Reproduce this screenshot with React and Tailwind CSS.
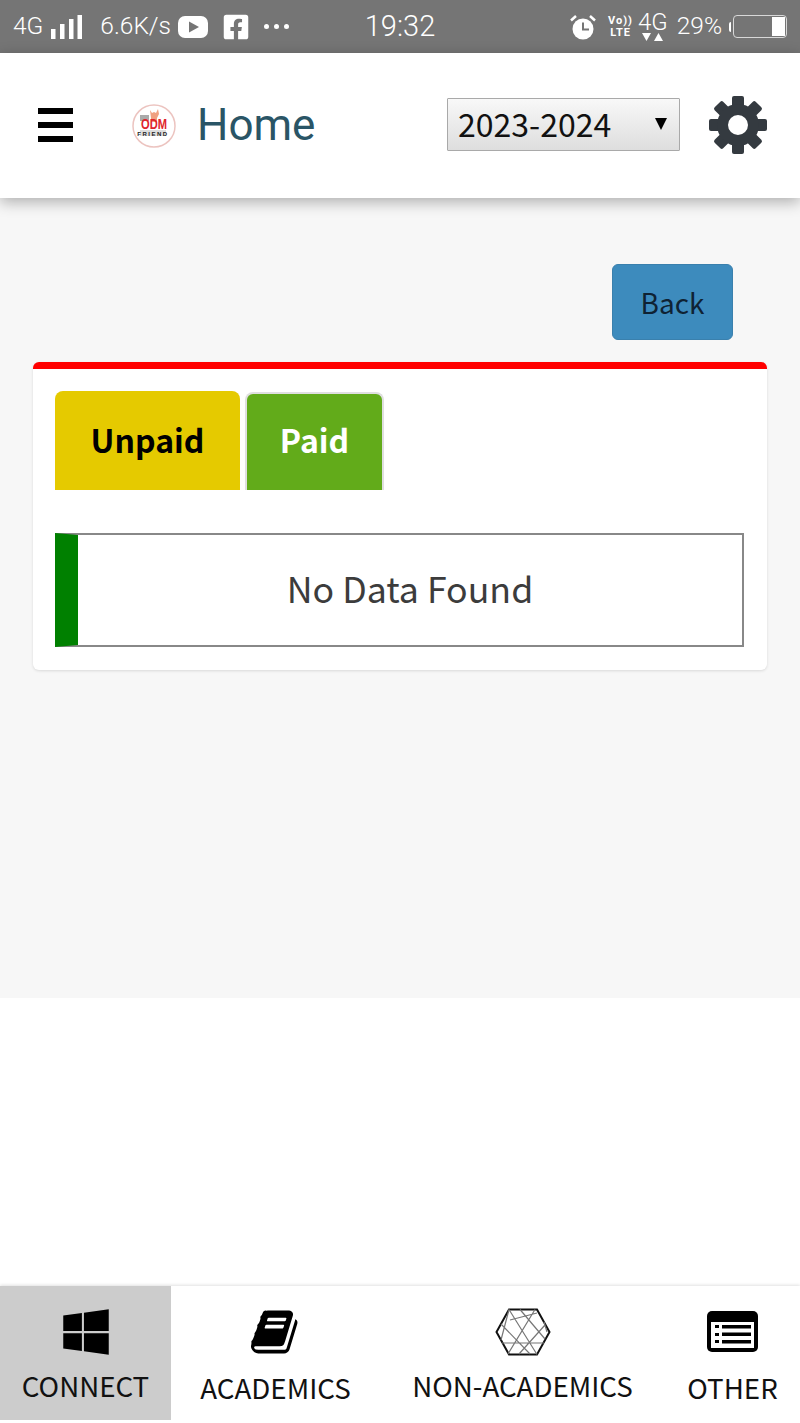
import React from 'react';
import { FaWindows, FaFacebookSquare } from 'react-icons/fa';

const CJK = { fontFamily: '"Noto Sans CJK SC", "Noto Sans", sans-serif' };

const SignalBars = () => (
	<svg width="31" height="24" viewBox="0 0 31 24" fill="#fff">
		<rect x="0" y="14" width="4.500" height="10" />
		<rect x="9" y="9" width="4.500" height="15" />
		<rect x="18" y="4" width="4.500" height="20" />
		<rect x="26.500" y="0" width="4.500" height="24" />
	</svg>
);

const YoutubeIcon = () => (
	<svg width="30" height="22" viewBox="0 0 30 22">
		<rect width="30" height="22" rx="7" fill="#fff" />
		<path d="M11 5.500v11l10-5.500z" fill="#757575" />
	</svg>
);

const AlarmIcon = () => (
	<svg width="26" height="26" viewBox="0 0 26 26">
		<circle cx="13" cy="15" r="10.500" fill="#fff" />
		<path d="M13 8.500v7h6" fill="none" stroke="#757575" strokeWidth="2" />
		<path d="M1 6.500 6 2M25 6.500 20 2" fill="none" stroke="#fff" strokeWidth="2.500" />
	</svg>
);

const Battery = () => (
	<div className="flex items-center">
		<div className="w-[2px] h-[10px] bg-white rounded-l-sm mr-[2px]" />
		<div className="w-[54px] h-[23px] border-[1.5px] border-[#d8d8d8] rounded-[4px] flex justify-end p-[1px]">
			<div className="w-[13px] bg-white" />
		</div>
	</div>
);

const StatusBar = () => (
	<div className="h-[53px] bg-[#757575] grid grid-cols-[300px_200px_300px] items-center text-white text-[24.5px] font-['Roboto'] font-light">
		<div className="flex items-center pl-[13px] whitespace-nowrap">
			<span>4G</span>
			<span className="ml-[8px]"><SignalBars /></span>
			<span className="ml-[18px]">6.6K/s</span>
			<span className="ml-[7px]"><YoutubeIcon /></span>
			<FaFacebookSquare className="ml-[14px]" size={28} color="#fff" />
			<span className="ml-[14px] flex gap-[5px]">
				<i className="block w-[5px] h-[5px] rounded-full bg-white" />
				<i className="block w-[5px] h-[5px] rounded-full bg-white" />
				<i className="block w-[5px] h-[5px] rounded-full bg-white" />
			</span>
		</div>
		<div className="text-center text-[29px]">19:32</div>
		<div className="flex items-center justify-end pr-[13px] whitespace-nowrap">
			<AlarmIcon />
			<div className="ml-[12px] flex flex-col items-center text-[11px] leading-[12px] font-bold tracking-[1px]">
				<span>Vo))</span>
				<span>LTE</span>
			</div>
			<div className="ml-[5px] flex flex-col items-center leading-none">
				<span className="text-[24px] leading-[22px]">4G</span>
				<svg width="21" height="9" viewBox="0 0 21 9" fill="#fff">
					<path d="M0 0h9L4.500 8zM12 8h9L16.500 0z" />
				</svg>
			</div>
			<span className="ml-[9px]">29%</span>
			<span className="ml-[7px]"><Battery /></span>
		</div>
	</div>
);

const Logo = () => (
	<svg width="46" height="46" viewBox="0 0 46 46">
		<circle cx="23" cy="23" r="21" fill="#fff" stroke="#ecc4c0" strokeWidth="1.500" />
		<rect x="9" y="12" width="9" height="6" fill="#aaa" />
		<path d="M19 7l2 3 2-1 2 1 2-4 1 5-2 4v4h-6v-4z" fill="#f0a080" />
		<text x="23" y="26" textAnchor="middle" fontSize="14" fontWeight="700" fill="#e0242c" fontFamily="Liberation Sans" textLength="26" lengthAdjust="spacingAndGlyphs">ODM</text>
		<rect x="9" y="27" width="26" height="6" fill="#ddd" />
		<text x="22" y="32.500" textAnchor="middle" fontSize="6" fontWeight="700" fill="#222" letterSpacing="1.500" fontFamily="Liberation Sans">FRIEND</text>
	</svg>
);

// eight square teeth around a ring, like the old font icon
const GearIcon = () => (
	<svg width="58" height="58" viewBox="0 0 58 58" fill="#343a40">
		{[0, 45, 90, 135, 180, 225, 270, 315].map((deg) => (
			<rect key={deg} x="23" y="0" width="12" height="14" rx="2" transform={`rotate(${deg} 29 29)`} />
		))}
		<path
			fillRule="evenodd"
			d="M29 8a21 21 0 1 0 0 42 21 21 0 1 0 0-42zM29 19a10 10 0 1 1 0 20 10 10 0 1 1 0-20z"
		/>
	</svg>
);

const Header = () => (
	<div className="relative z-10 h-[145px] bg-white shadow-[0_4px_14px_rgba(0,0,0,0.3)] flex items-center">
		<div className="ml-[38px] w-[35px] flex flex-col gap-[8px] -mt-[1px]">
			<div className="h-[6px] bg-black" />
			<div className="h-[6px] bg-black" />
			<div className="h-[6px] bg-black" />
		</div>
		<div className="ml-[58px]"><Logo /></div>
		<div className="ml-[20px] text-[44px] font-['Roboto'] text-[#2a5566] -mt-[1px]">Home</div>
		<div className="relative ml-auto w-[233px] h-[53px] -mt-[3px]">
			<select
				defaultValue="2023-2024"
				style={CJK}
				className="appearance-none w-full h-full border border-[#a9a9a9] rounded-[1px] bg-gradient-to-b from-[#f8f8f8] to-[#dedede] pl-[10px] pb-[4px] text-[32px] text-[#111]"
			>
				<option>2023-2024</option>
			</select>
			<div className="absolute right-[13px] top-[20px] w-0 h-0 border-x-[6px] border-x-transparent border-t-[12px] border-t-black" />
		</div>
		<div className="ml-[29px] mr-[33px] -mt-[1px]"><GearIcon /></div>
	</div>
);

const Card = () => (
	<div className="mx-[33px] mt-[22px] h-[308px] bg-white border-t-[7px] border-t-[#ff0000] rounded-[6px] shadow-[0_1px_3px_rgba(0,0,0,0.12)] px-[22px] pt-[22px]">
		<div className="flex items-end gap-[5px]">
			<div className="w-[185px] h-[99px] pb-[3px] bg-[#e5ca00] rounded-t-[8px] flex items-center justify-center text-[32px] font-bold text-black">
				Unpaid
			</div>
			<div className="w-[139px] h-[98px] pb-[7px] bg-[#62ab1a] border-2 border-b-0 border-[#dfdfdf] rounded-t-[8px] flex items-center justify-center text-[32px] font-bold text-white">
				Paid
			</div>
		</div>
		<div className="mt-[43px] w-[689px] h-[114px] pb-[4px] border-2 border-[#888] border-l-[23px] border-l-[#008000] flex items-center justify-center text-[35.7px] text-[#3c3c3c]">
			No Data Found
		</div>
	</div>
);

const Main = () => (
	<div className="h-[800px] bg-[#f7f7f7] pt-[66px]" style={CJK}>
		<div className="flex justify-end pr-[67px]">
			<div className="w-[121px] h-[76px] bg-[#3d8bbd] border border-[#3a80ad] rounded-[6px] flex items-center justify-center text-[28px] text-[#0f2233]">
				Back
			</div>
		</div>
		<Card />
	</div>
);

const BookIcon = () => (
	<svg width="50" height="50" viewBox="0 0 1792 1792" fill="#000">
		<path d="M1639 478q40 57 18 129l-275 906q-19 64-76.500 107.500t-122.500 43.500h-923q-77 0-148.500-53.500t-99.500-131.500q-24-67-2-127 0-4 3-27t4-37q1-8-3-21.500t-3-19.500q2-11 8-21t16.500-23.500 16.500-23.500q23-38 45-91.500t30-91.500q3-10 .5-30t-.5-28q3-11 17-28t17-23q21-36 42-92t25-90q1-9-2.500-32t.5-28q4-13 22-30.500t22-22.500q19-26 42.500-84.500t27.500-96.500q1-8-3-25.500t-2-26.500q2-8 9-18t18-23 17-21q8-12 16.500-30.500t15-35 16-36 19.500-32 26.500-23.500 36-11.500 47.500 5.500l-1 3q38-9 51-9h761q74 0 114 56t18 130l-274 906q-36 119-71.500 153.500t-128.500 34.500h-869q-27 0-38 15-11 16-1 43 24 70 144 70h923q29 0 56-15.500t35-41.500l300-987q7-22 5-57 38 15 59 43zm-1064 2q-4 13 2 22.500t20 9.500h608q13 0 25.500-9.500t16.500-22.500l21-64q4-13-2-22.500t-20-9.500h-608q-13 0-25.500 9.500t-16.500 22.500zm-83 256q-4 13 2 22.500t20 9.500h608q13 0 25.500-9.500t16.500-22.500l21-64q4-13-2-22.500t-20-9.500h-608q-13 0-25.500 9.500t-16.500 22.500z" />
	</svg>
);

const HexIcon = () => (
	<svg width="56" height="48" viewBox="0 0 56 48" fill="none">
		<path d="M14 1.500h28L54.500 24 42 46.500H14L1.500 24z" stroke="#111" strokeWidth="2" />
		<path d="M14 1.500 42 46.500M40 1.500 13 46M6 16l29 30M50 17 24 46M7 35h42M15 12 42 5M49 14l3 10M14 1.500 6 32M25 1.500 50 31" stroke="#777" strokeWidth="1.200" />
	</svg>
);

const ListIcon = () => (
	<svg width="51" height="41" viewBox="0 0 51 41">
		<rect width="51" height="41" rx="5" fill="#000" />
		<rect x="4" y="11" width="43" height="26" fill="#fff" />
		<rect x="8" y="14" width="4" height="3" fill="#000" />
		<rect x="8" y="22" width="4" height="3" fill="#000" />
		<rect x="8" y="29" width="4" height="3" fill="#000" />
		<rect x="15" y="14" width="29" height="3.500" fill="#000" />
		<rect x="15" y="21.500" width="29" height="3.500" fill="#000" />
		<rect x="15" y="29" width="29" height="3.500" fill="#000" />
	</svg>
);

const NavItem = ({ width, label, active, raised, children }) => (
	<div className={`${width} ${active ? 'bg-[#cccccc]' : ''} h-[134px] flex flex-col items-center`}>
		<div className="h-[77px] mt-[7px] flex items-center justify-center">{children}</div>
		<div className={`text-[27.7px] leading-[34px] text-[#111] whitespace-nowrap ${raised ? '-mt-[2px]' : ''}`}>{label}</div>
	</div>
);

const BottomNav = () => (
	<div className="h-[137px] bg-white shadow-[0_-1px_3px_rgba(0,0,0,0.12)] flex items-start" style={CJK}>
		<NavItem width="w-[171px]" label="CONNECT" active raised>
			<FaWindows size={52} color="#000" />
		</NavItem>
		<NavItem width="w-[209px]" label="ACADEMICS"><BookIcon /></NavItem>
		<NavItem width="w-[285px]" label="NON-ACADEMICS" raised><HexIcon /></NavItem>
		<NavItem width="w-[135px]" label="OTHER"><ListIcon /></NavItem>
	</div>
);

export default function App() {
	return (
		<div className="w-[800px] h-[1423px] bg-white overflow-hidden flex flex-col">
			<StatusBar />
			<Header />
			<Main />
			<div className="h-[288px] bg-white" />
			<BottomNav />
		</div>
	);
}
